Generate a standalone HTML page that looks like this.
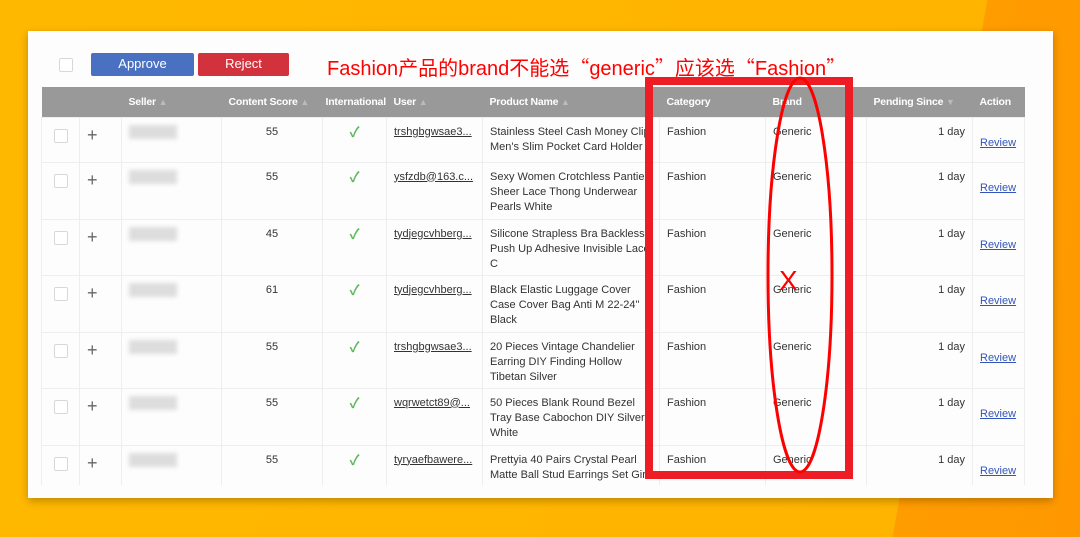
<!DOCTYPE html><html><head><meta charset="utf-8"><style>
*{margin:0;padding:0;box-sizing:border-box}
body{width:1080px;height:537px;overflow:hidden;position:relative;font-family:"Liberation Sans","Noto Sans CJK SC",sans-serif;background:linear-gradient(100deg,#ffb800 0%,#ffb400 84%,#ff9c00 84.1%,#ff9800 100%)}
.panel{position:absolute;left:28px;top:31px;width:1025px;height:467px;background:#fdfdfd;box-shadow:0 3px 8px rgba(0,0,0,.25);overflow:hidden}
.abs{position:absolute}
.cb{position:absolute;width:14px;height:14px;border:1px solid #d8d8d8;border-radius:2px;background:#fff}
.btn{position:absolute;color:#fff;font-size:13px;text-align:center;line-height:22px;border-radius:2px}
table{position:absolute;left:13px;top:56px;width:983px;border-collapse:collapse;font-size:11px;color:#333;table-layout:fixed}
th{background:#999;color:#fff;height:30px;text-align:left;font-weight:bold;padding-left:7px;font-size:10.5px;letter-spacing:-0.2px;white-space:nowrap;overflow:hidden}
td{border:1px solid #eee;vertical-align:top;padding:7px 7px 0;line-height:15px;overflow:hidden}
.r{text-align:right}.c{text-align:center}
u{color:#333;white-space:nowrap}
a{color:#3355bb;text-decoration:underline}
.blur{display:inline-block;width:48px;height:14px;background:#ddd;filter:blur(2px)}
.arr{color:#bbb;font-size:9px}
.q{font-family:"Noto Sans CJK SC",sans-serif;font-weight:300}
.ck{color:#5cb85c;font-size:14px;font-weight:bold}
</style></head><body>
<div class="panel">
<div class="cb" style="left:31px;top:27px"></div>
<div class="btn" style="left:63px;top:22px;width:103px;height:23px;background:#4a70c2">Approve</div>
<div class="btn" style="left:170px;top:22px;width:91px;height:23px;background:#d2323b">Reject</div>
<div class="abs" style="left:299px;top:24px;color:#f00;font-size:20px;line-height:24px;white-space:nowrap">Fashion产品的brand不能选<span class="q">“</span>generic<span class="q">”</span>应该选<span class="q">“</span>Fashion<span class="q">”</span></div>
<table>
<colgroup><col style="width:38px"><col style="width:42px"><col style="width:100px"><col style="width:101px"><col style="width:64px"><col style="width:96px"><col style="width:177px"><col style="width:106px"><col style="width:101px"><col style="width:106px"><col style="width:52px"></colgroup>
<tr><th></th><th></th><th>Seller <span class="arr">▲</span></th><th>Content Score <span class="arr">▲</span></th><th style="padding-left:3px">International</th><th>User <span class="arr">▲</span></th><th>Product Name <span class="arr">▲</span></th><th>Category</th><th>Brand</th><th>Pending Since <span class="arr">▼</span></th><th>Action</th></tr>
<tr style="height:45px"><td><div class="cb" style="position:relative;left:5px;top:4px"></div></td><td style="font-size:18px;color:#666;padding-top:10px">+</td><td><span class="blur"></span></td><td class="c">55</td><td class="c ck">✓</td><td><u>trshgbgwsae3...</u></td><td>Stainless Steel Cash Money Clip Men's Slim Pocket Card Holder</td><td>Fashion</td><td>Generic</td><td class="r">1 day</td><td style="padding-top:18px"><a>Review</a></td></tr>
<tr style="height:57px"><td><div class="cb" style="position:relative;left:5px;top:4px"></div></td><td style="font-size:18px;color:#666;padding-top:10px">+</td><td><span class="blur"></span></td><td class="c">55</td><td class="c ck">✓</td><td><u>ysfzdb@163.c...</u></td><td>Sexy Women Crotchless Panties Sheer Lace Thong Underwear Pearls White</td><td>Fashion</td><td>Generic</td><td class="r">1 day</td><td style="padding-top:18px"><a>Review</a></td></tr>
<tr style="height:56px"><td><div class="cb" style="position:relative;left:5px;top:4px"></div></td><td style="font-size:18px;color:#666;padding-top:10px">+</td><td><span class="blur"></span></td><td class="c">45</td><td class="c ck">✓</td><td><u>tydjegcvhberg...</u></td><td>Silicone Strapless Bra Backless Push Up Adhesive Invisible Lace C</td><td>Fashion</td><td>Generic</td><td class="r">1 day</td><td style="padding-top:18px"><a>Review</a></td></tr>
<tr style="height:57px"><td><div class="cb" style="position:relative;left:5px;top:4px"></div></td><td style="font-size:18px;color:#666;padding-top:10px">+</td><td><span class="blur"></span></td><td class="c">61</td><td class="c ck">✓</td><td><u>tydjegcvhberg...</u></td><td>Black Elastic Luggage Cover Case Cover Bag Anti M 22-24" Black</td><td>Fashion</td><td>Generic</td><td class="r">1 day</td><td style="padding-top:18px"><a>Review</a></td></tr>
<tr style="height:56px"><td><div class="cb" style="position:relative;left:5px;top:4px"></div></td><td style="font-size:18px;color:#666;padding-top:10px">+</td><td><span class="blur"></span></td><td class="c">55</td><td class="c ck">✓</td><td><u>trshgbgwsae3...</u></td><td>20 Pieces Vintage Chandelier Earring DIY Finding Hollow Tibetan Silver</td><td>Fashion</td><td>Generic</td><td class="r">1 day</td><td style="padding-top:18px"><a>Review</a></td></tr>
<tr style="height:57px"><td><div class="cb" style="position:relative;left:5px;top:4px"></div></td><td style="font-size:18px;color:#666;padding-top:10px">+</td><td><span class="blur"></span></td><td class="c">55</td><td class="c ck">✓</td><td><u>wqrwetct89@...</u></td><td>50 Pieces Blank Round Bezel Tray Base Cabochon DIY Silver White</td><td>Fashion</td><td>Generic</td><td class="r">1 day</td><td style="padding-top:18px"><a>Review</a></td></tr>
<tr style="height:56px"><td><div class="cb" style="position:relative;left:5px;top:4px"></div></td><td style="font-size:18px;color:#666;padding-top:10px">+</td><td><span class="blur"></span></td><td class="c">55</td><td class="c ck">✓</td><td><u>tyryaefbawere...</u></td><td>Prettyia 40 Pairs Crystal Pearl Matte Ball Stud Earrings Set Girl</td><td>Fashion</td><td>Generic</td><td class="r">1 day</td><td style="padding-top:18px"><a>Review</a></td></tr>
</table>
<div class="abs" style="left:0;top:454px;width:1025px;height:13px;background:#fdfdfd"></div>
</div>
<svg class="abs" style="left:0;top:0" width="1080" height="537">
<rect x="649" y="81" width="200" height="394" fill="none" stroke="#ee1c25" stroke-width="8"/>
<ellipse cx="800" cy="275" rx="32" ry="197" fill="none" stroke="#f00" stroke-width="3"/>
<text x="779" y="290" fill="#f00" font-size="28" font-family="Liberation Sans">X</text>
</svg>
</body></html>
